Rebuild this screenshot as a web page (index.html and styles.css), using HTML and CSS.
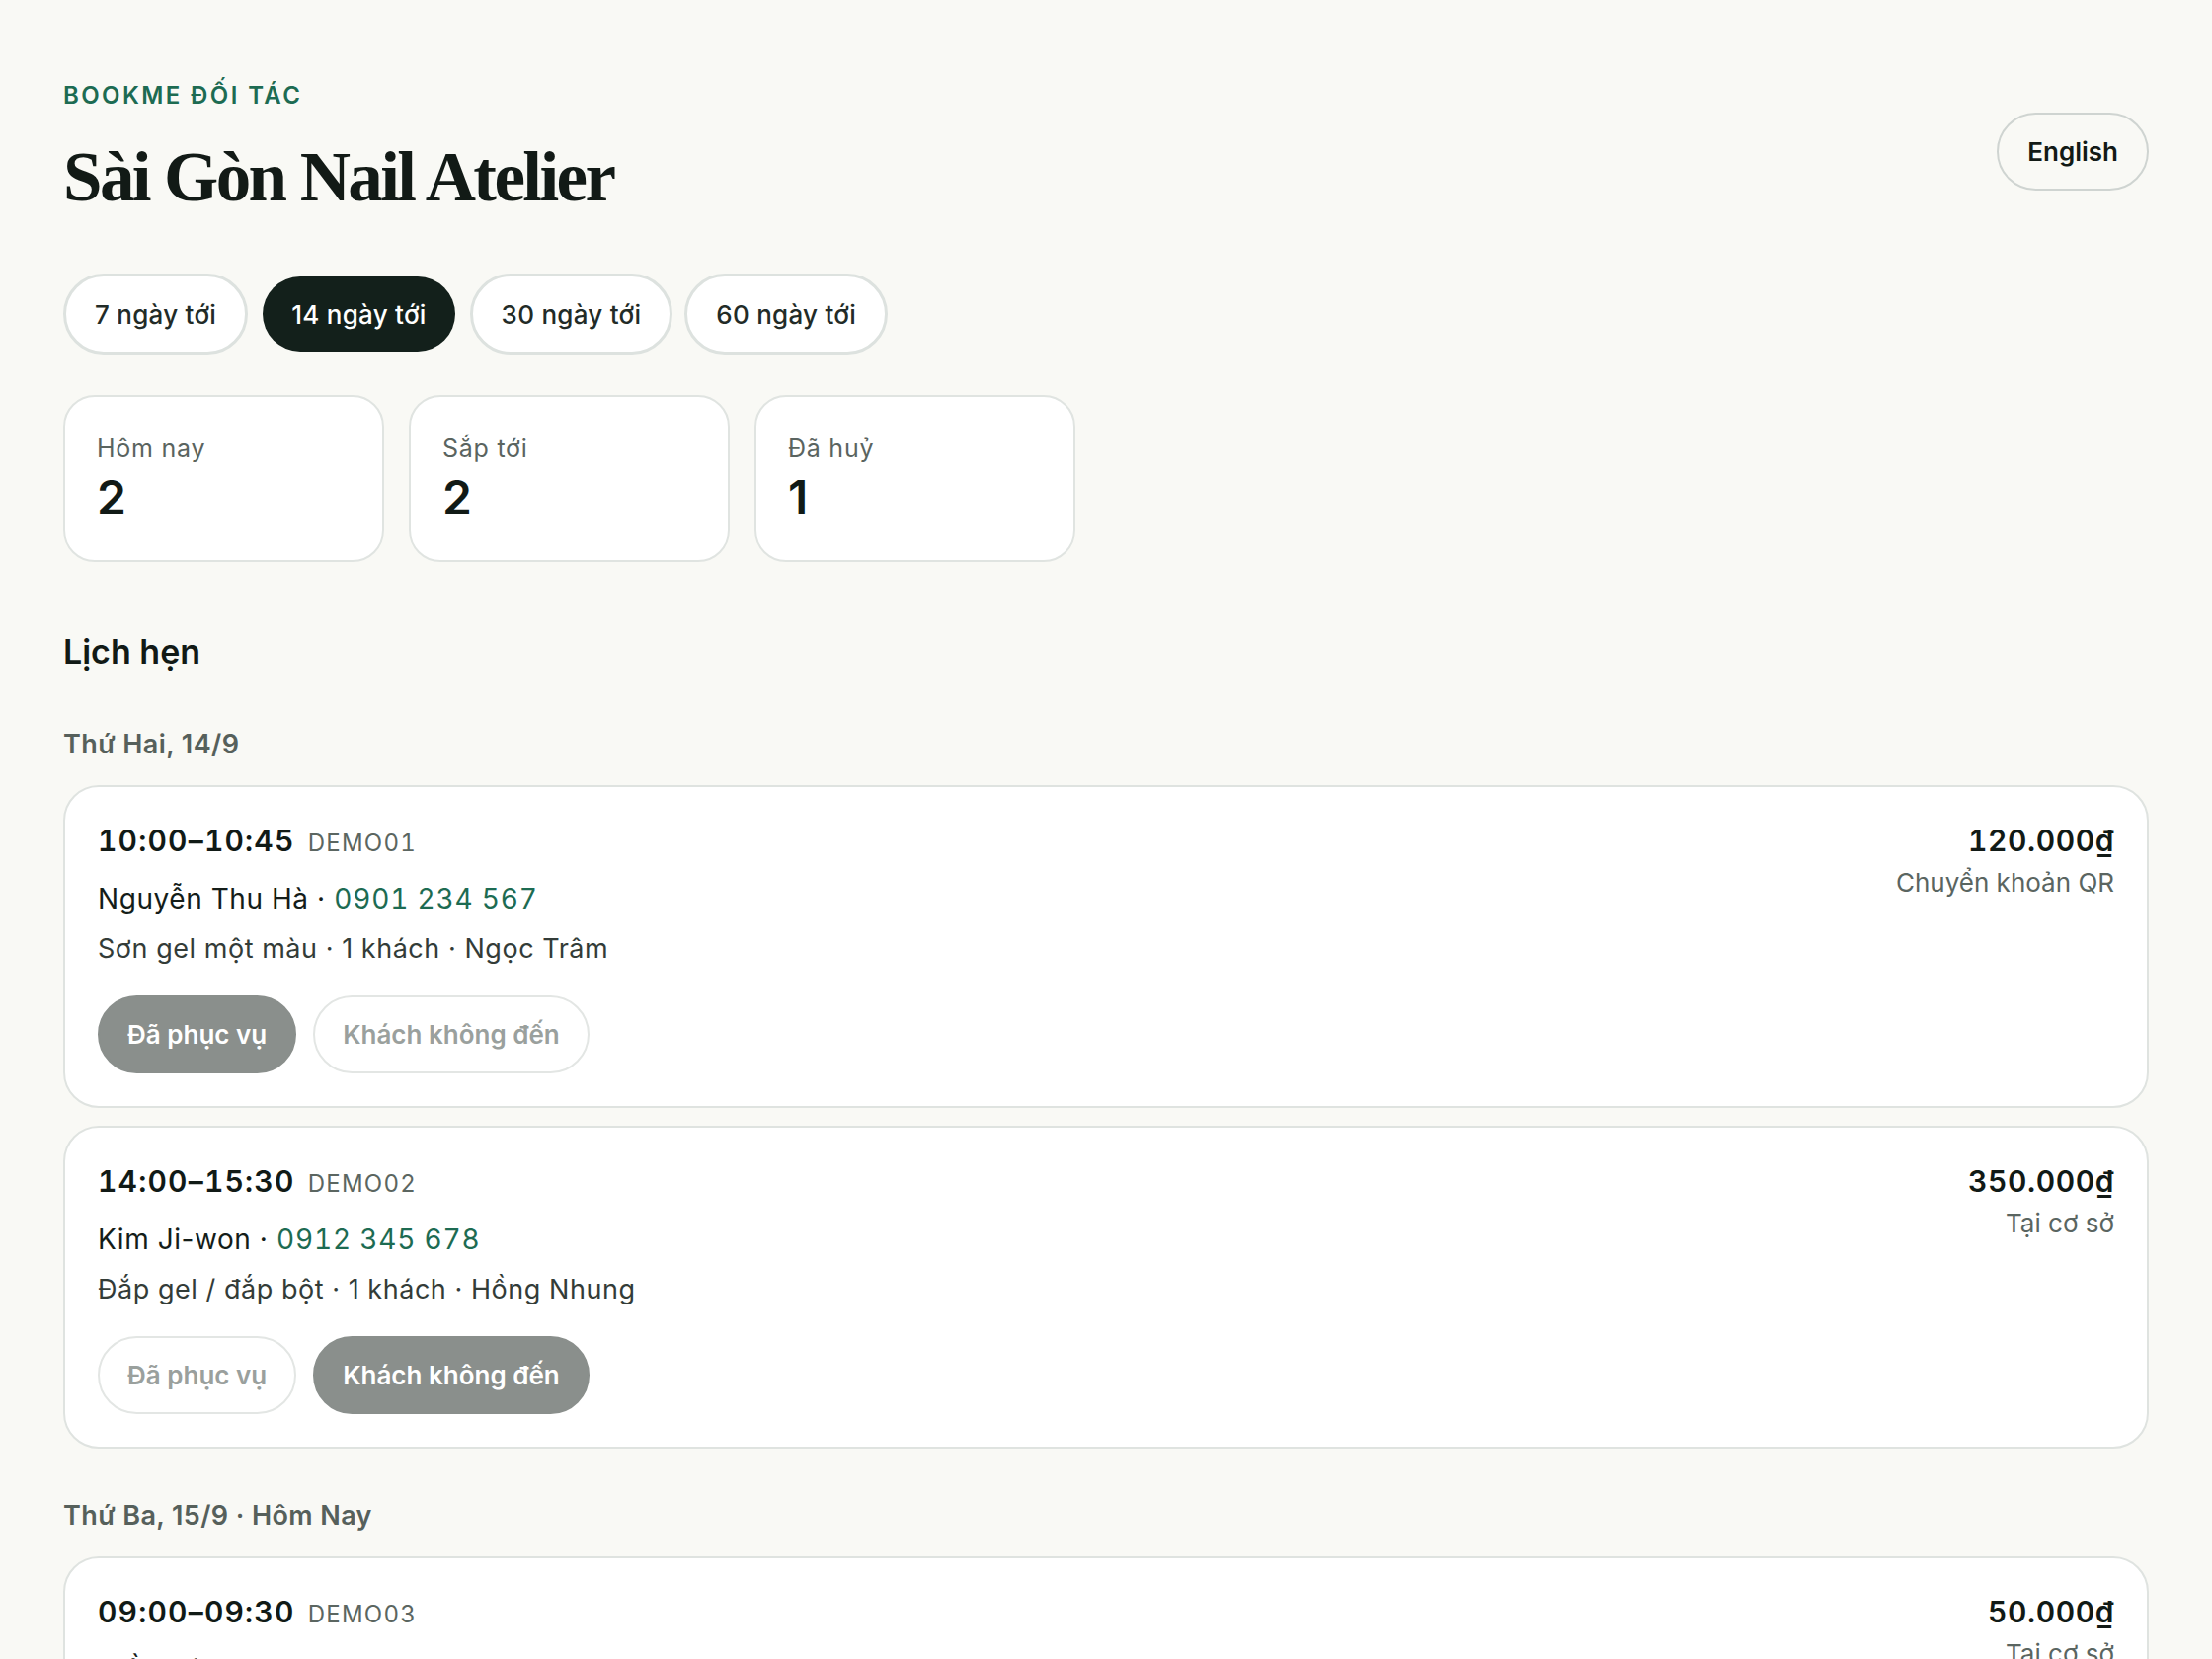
FILE: index.html
```html
<!DOCTYPE html>
<html lang="vi">
<head>
<meta charset="utf-8">
<title>Sài Gòn Nail Atelier · BookMe Đối tác</title>
<link rel="stylesheet" href="styles.css">
</head>
<body>
<main class="page">
  <header class="top">
    <div class="brand">
      <div class="eyebrow">BookMe Đối tác</div>
      <h1 class="title">Sài Gòn Nail Atelier</h1>
    </div>
    <button class="lang">English</button>
  </header>

  <nav class="chips">
    <button class="chip">7 ngày tới</button>
    <button class="chip chip-active">14 ngày tới</button>
    <button class="chip">30 ngày tới</button>
    <button class="chip">60 ngày tới</button>
  </nav>

  <section class="stats">
    <div class="stat">
      <div class="stat-label">Hôm nay</div>
      <div class="stat-value">2</div>
    </div>
    <div class="stat">
      <div class="stat-label">Sắp tới</div>
      <div class="stat-value">2</div>
    </div>
    <div class="stat">
      <div class="stat-label">Đã huỷ</div>
      <div class="stat-value">1</div>
    </div>
  </section>

  <section class="schedule">
    <h2 class="section-title">Lịch hẹn</h2>

    <div class="day">
      <h3 class="day-title">Thứ Hai, 14/9</h3>

      <article class="booking">
        <div class="booking-main">
          <div class="booking-time">10:00–10:45 <span class="code">DEMO01</span></div>
          <div class="booking-who">Nguyễn Thu Hà · <span class="phone">0901 234 567</span></div>
          <div class="booking-what">Sơn gel một màu · 1 khách · Ngọc Trâm</div>
          <div class="actions">
            <button class="act act-on">Đã phục vụ</button>
            <button class="act">Khách không đến</button>
          </div>
        </div>
        <div class="booking-side">
          <div class="price">120.000₫</div>
          <div class="pay">Chuyển khoản QR</div>
        </div>
      </article>

      <article class="booking">
        <div class="booking-main">
          <div class="booking-time">14:00–15:30 <span class="code">DEMO02</span></div>
          <div class="booking-who">Kim Ji-won · <span class="phone">0912 345 678</span></div>
          <div class="booking-what">Đắp gel / đắp bột · 1 khách · Hồng Nhung</div>
          <div class="actions">
            <button class="act">Đã phục vụ</button>
            <button class="act act-on">Khách không đến</button>
          </div>
        </div>
        <div class="booking-side">
          <div class="price">350.000₫</div>
          <div class="pay">Tại cơ sở</div>
        </div>
      </article>
    </div>

    <div class="day">
      <h3 class="day-title">Thứ Ba, 15/9 · Hôm Nay</h3>

      <article class="booking">
        <div class="booking-main">
          <div class="booking-time">09:00–09:30 <span class="code">DEMO03</span></div>
          <div class="booking-who">Trần Minh Anh · <span class="phone">0987 654 321</span></div>
          <div class="booking-what">Cắt da · 1 khách · Ngọc Trâm</div>
          <div class="actions">
            <button class="act">Đã phục vụ</button>
            <button class="act">Khách không đến</button>
          </div>
        </div>
        <div class="booking-side">
          <div class="price">50.000₫</div>
          <div class="pay">Tại cơ sở</div>
        </div>
      </article>
    </div>
  </section>
</main>
</body>
</html>
```

FILE: styles.css
```css
* {
  box-sizing: border-box;
}

html, body {
  margin: 0;
  background: #f9f9f5;
}

body {
  font-family: Inter, "Noto Sans", "DejaVu Sans", sans-serif;
  color: #131c18;
}

button {
  font-family: inherit;
  cursor: pointer;
}

.page {
  padding: 81px 64px 80px;
}

/* header */
.top {
  display: flex;
  justify-content: space-between;
  align-items: center;
}

.eyebrow {
  font-size: 24px;
  line-height: 32px;
  font-weight: 600;
  letter-spacing: 0.1em;
  text-transform: uppercase;
  color: #1d6b52;
}

.title {
  margin: 26px 0 0;
  font-family: "Liberation Serif", "DejaVu Serif", serif;
  font-size: 71px;
  line-height: 80px;
  font-weight: 700;
  letter-spacing: -2.6px;
  color: #121a16;
}

.lang {
  margin-top: 6px;
  height: 79px;
  padding: 0 29px;
  border: 2px solid #cfd4d1;
  border-radius: 999px;
  background: transparent;
  font-size: 26px;
  font-weight: 600;
  color: #121a16;
}

/* range chips */
.chips {
  display: flex;
  gap: 12px;
  margin-top: 58px;
}

.chip {
  height: 82px;
  padding: 0 29px;
  border: 3px solid #dde2df;
  border-radius: 999px;
  background: #fff;
  font-size: 26px;
  font-weight: 500;
  letter-spacing: 0.01em;
  color: #222b27;
}

.chip-active {
  border-color: transparent;
  background: #13201b;
  background-clip: padding-box;
  color: #fff;
}

/* summary cards */
.stats {
  display: grid;
  grid-template-columns: repeat(3, 325px);
  gap: 25px;
  margin-top: 41px;
}

.stat {
  height: 169px;
  padding: 36px 32px 34px;
  border: 2px solid #e0e4e1;
  border-radius: 32px;
  background: #fff;
}

.stat-label {
  font-size: 25px;
  line-height: 32px;
  letter-spacing: 0.03em;
  color: #5a6460;
}

.stat-value {
  margin-top: 6px;
  font-size: 48px;
  line-height: 56px;
  font-weight: 600;
  color: #111a16;
}

/* schedule */
.schedule {
  margin-top: 69px;
}

.section-title {
  margin: 0;
  font-size: 34px;
  line-height: 44px;
  font-weight: 600;
  color: #121a16;
}

.day {
  margin-top: 54px;
}

.day + .day {
  margin-top: 50px;
}

.day-title {
  margin: 0 0 23px;
  font-size: 27px;
  line-height: 36px;
  font-weight: 600;
  letter-spacing: 0.015em;
  color: #56605b;
}

.booking {
  display: flex;
  justify-content: space-between;
  align-items: flex-start;
  padding: 34px 33px 33px;
  border: 2px solid #dfe3e0;
  border-radius: 36px;
  background: #fff;
}

.booking + .booking {
  margin-top: 18px;
}

.booking-time {
  font-size: 30px;
  line-height: 40px;
  font-weight: 600;
  letter-spacing: 0.04em;
  font-variant-numeric: tabular-nums;
  color: #111a16;
}

.code {
  margin-left: 4px;
  font-size: 24px;
  font-weight: 400;
  letter-spacing: 0.05em;
  color: #5b6661;
}

.booking-who {
  margin-top: 16px;
  font-size: 28px;
  line-height: 40px;
  letter-spacing: 0.02em;
  color: #141d19;
}

.phone {
  font-variant-numeric: tabular-nums;
  letter-spacing: 0.03em;
  color: #1d6b52;
}

.booking-what {
  margin-top: 12px;
  font-size: 27px;
  line-height: 38px;
  letter-spacing: 0.02em;
  color: #333c38;
}

.actions {
  display: flex;
  gap: 17px;
  margin-top: 28px;
}

.act {
  height: 79px;
  padding: 0 28px;
  border: 2px solid #e3e6e4;
  border-radius: 999px;
  background: #fff;
  font-size: 26px;
  font-weight: 600;
  color: #9aa09d;
}

.act-on {
  border-color: #8a8f8c;
  background: #8a8f8c;
  color: #fff;
}

.booking-side {
  text-align: right;
}

.price {
  font-size: 30px;
  line-height: 40px;
  font-weight: 600;
  letter-spacing: 0.02em;
  font-variant-numeric: tabular-nums;
  color: #111a16;
}

.pay {
  margin-top: 4px;
  font-size: 26px;
  line-height: 38px;
  color: #5a6561;
}
```
